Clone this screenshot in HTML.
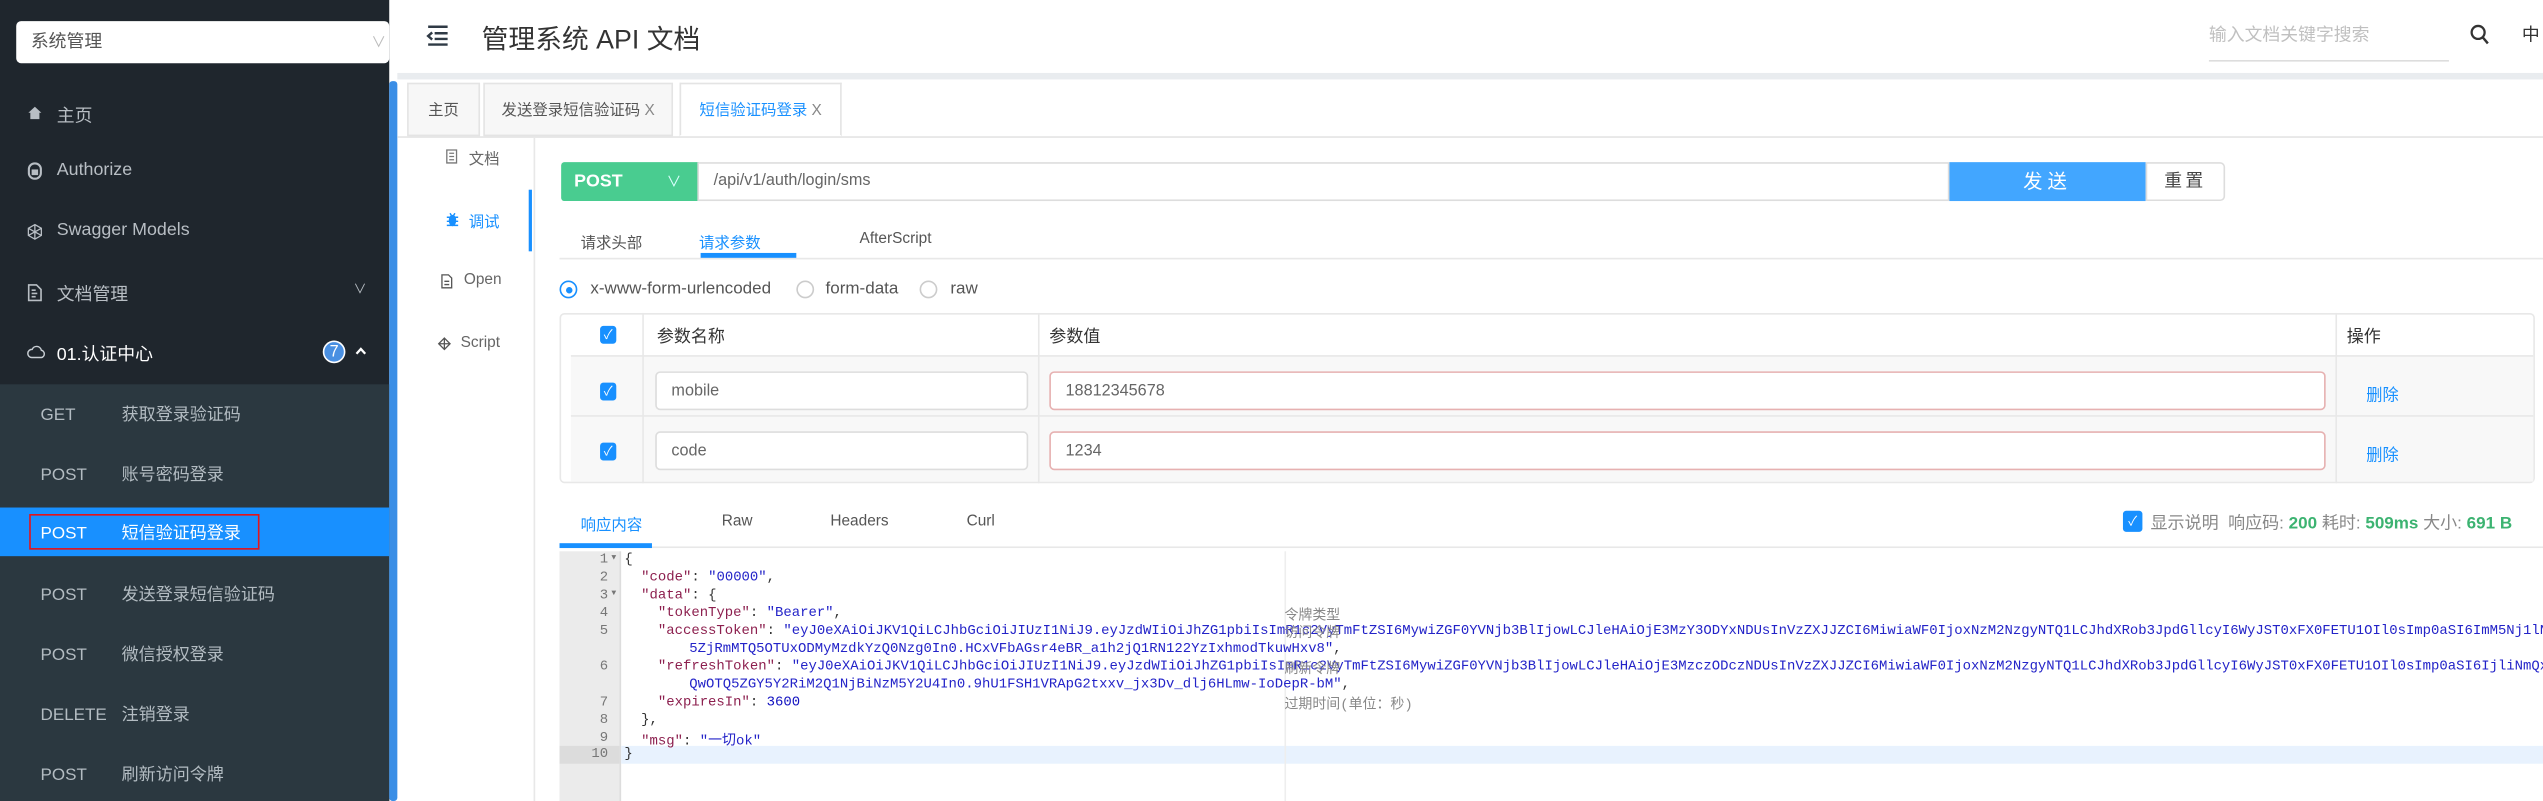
<!DOCTYPE html>
<html><head><meta charset="utf-8">
<style>
html,body{margin:0;padding:0;width:2543px;height:801px;overflow:hidden;background:#fff}
#w{position:absolute;left:0;top:0;width:1568px;height:494px;transform:scale(1.62181,1.62146);transform-origin:0 0;font-family:"Liberation Sans","Noto Sans CJK SC",sans-serif;color:#333;overflow:hidden}
.a{position:absolute;white-space:nowrap}
.side{left:0;top:0;width:240px;height:494px;background:#1f262d}
.sub{left:0;top:237px;width:240px;height:257px;background:#2b3840}
.mi{color:#b8bec4;font-size:11px}
.si{color:#b3bcc2;font-size:10.5px}
.si b{font-weight:normal;display:inline-block;width:50px}
.tab{top:51px;height:33px;border:1px solid #e4e4e4;background:#f7f7f7;font-size:9.5px;line-height:33px;box-sizing:border-box;text-align:center;color:#555}
.mono{font-family:"Liberation Mono","DejaVu Sans Mono","Noto Sans CJK SC",monospace;font-size:8.6px}
.k{color:#8c1f4e}.s{color:#2323c8}.n{color:#1010c0}
.ln{left:345px;width:30px;text-align:right;color:#777;font-size:8.6px}
.cb{width:10px;height:11px;background:#1890ff;border-radius:2px;color:#fff;font-size:8px;line-height:11px;text-align:center}
.inp{height:24px;border:1px solid #ddd;border-radius:3px;background:#fff;box-sizing:border-box;font-size:10px;line-height:22px;padding-left:9px;color:#666}
svg.a{overflow:visible}
</style></head><body><div id="w">
<div class="a side"></div>
<div class="a sub"></div>
<div class="a" style="left:10px;top:13px;width:230px;height:26px;background:#fff;border-radius:3px;font-size:11px;line-height:26px;padding-left:9px;box-sizing:border-box;color:#555">系统管理<span class="a" style="left:219px;top:0;color:#bbb;font-size:9px">∨</span></div>
<div class="a" style="left:240px;top:50px;width:5px;height:444px;background:#3a8ee6;border-radius:2px"></div>

<svg class="a" style="left:17px;top:65px" width="9" height="9" viewBox="0 0 9 9"><path d="M0.5 4.5L4.5 0.8L8.5 4.5H7.3V8.5H1.7V4.5Z" fill="#b8bec4"/></svg>
<div class="a mi" style="left:35px;top:63px">主页</div>
<svg class="a" style="left:17px;top:100px" width="9" height="11" viewBox="0 0 9 11"><rect x="0.8" y="0.8" width="7.4" height="9.4" rx="3.5" fill="none" stroke="#b8bec4" stroke-width="1.3"/><rect x="2.5" y="4.5" width="4" height="3.5" fill="#b8bec4"/></svg>
<div class="a mi" style="left:35px;top:99px">Authorize</div>
<svg class="a" style="left:17px;top:138px" width="9" height="10" viewBox="0 0 9 10"><path d="M4.5 0.5L8.5 2.8V7.2L4.5 9.5L0.5 7.2V2.8Z M4.5 0.5V9.5 M0.5 2.8L8.5 7.2 M8.5 2.8L0.5 7.2" fill="none" stroke="#b8bec4" stroke-width="0.8"/></svg>
<div class="a mi" style="left:35px;top:136px">Swagger Models</div>
<svg class="a" style="left:17px;top:175px" width="9" height="11" viewBox="0 0 9 11"><path d="M0.7 0.7H5.5L8.3 3.5V10.3H0.7Z M2.5 4H5 M2.5 6H6 M2.5 8H5" fill="none" stroke="#b8bec4" stroke-width="1"/></svg>
<div class="a mi" style="left:35px;top:173px">文档管理</div><div class="a mi" style="left:218px;top:173px;font-size:8px">∨</div>
<svg class="a" style="left:17px;top:213px" width="11" height="8" viewBox="0 0 11 8"><path d="M2.5 7.5H8.5A2.3 2.3 0 0 0 8.5 3A3 3 0 0 0 2.8 2.5A2.5 2.5 0 0 0 2.5 7.5Z" fill="none" stroke="#c8ced4" stroke-width="0.9"/></svg>
<div class="a" style="left:35px;top:210px;color:#fff;font-size:11px">01.认证中心</div>
<div class="a" style="left:199px;top:210px;width:14px;height:14px;border-radius:50%;background:#4a90e2;color:#fff;font-size:10px;line-height:14px;text-align:center;border:1px solid #fff;box-sizing:border-box">7</div>
<svg class="a" style="left:219px;top:214px" width="7" height="5" viewBox="0 0 7 5"><path d="M0.8 4.2L3.5 1.2L6.2 4.2" fill="none" stroke="#fff" stroke-width="1.4"/></svg>
<div class="a si" style="left:25px;top:248px"><b>GET</b>获取登录验证码</div>
<div class="a si" style="left:25px;top:285px"><b>POST</b>账号密码登录</div>
<div class="a" style="left:0;top:313px;width:240px;height:30px;background:#1890ff"></div>
<div class="a" style="left:18px;top:317px;width:142px;height:22px;border:1.5px solid #e3141b;box-sizing:border-box"></div>
<div class="a si" style="left:25px;top:321px;color:#fff"><b>POST</b>短信验证码登录</div>
<div class="a si" style="left:25px;top:359px"><b>POST</b>发送登录短信验证码</div>
<div class="a si" style="left:25px;top:396px"><b>POST</b>微信授权登录</div>
<div class="a si" style="left:25px;top:433px"><b style="width:50px">DELETE</b>注销登录</div>
<div class="a si" style="left:25px;top:470px"><b>POST</b>刷新访问令牌</div>

<div class="a" style="left:245px;top:45px;width:1323px;height:4px;background:#e9ecef"></div>
<svg class="a" style="left:263px;top:15px" width="14" height="14" viewBox="0 0 14 14"><path d="M1 1.5H13 M5 5.5H13 M5 9H13 M1 12.5H13 M3.5 5L1 7.2L3.5 9.4" fill="none" stroke="#2f3a45" stroke-width="1.5"/></svg>
<div class="a" style="left:297px;top:11px;font-size:16.5px;color:#333">管理系统 API 文档</div>
<div class="a" style="left:1362px;top:13px;font-size:11px;color:#c0c0c0">输入文档关键字搜索</div>
<div class="a" style="left:1362px;top:37px;width:148px;height:1px;background:#ddd"></div>
<svg class="a" style="left:1523px;top:15px" width="12" height="13" viewBox="0 0 12 13"><circle cx="5" cy="5" r="4" fill="none" stroke="#333" stroke-width="1.4"/><path d="M8 8.2L11 11.8" stroke="#333" stroke-width="1.5"/></svg>
<div class="a" style="left:1555px;top:13px;font-size:11px;color:#333">中</div>

<div class="a tab" style="left:251px;width:45px">主页</div>
<div class="a tab" style="left:298px;width:117px">发送登录短信验证码 <span style="color:#888">X</span></div>
<div class="a tab" style="left:419px;width:100px;background:#fff;color:#1890ff;border-bottom-color:#fff">短信验证码登录 <span style="color:#888">X</span></div>
<div class="a" style="left:245px;top:84px;width:1323px;height:1px;background:#e4e4e4"></div>

<div class="a" style="left:329px;top:85px;width:1px;height:409px;background:#e8e8e8"></div>
<svg class="a" style="left:275px;top:92px" width="7" height="9" viewBox="0 0 7 9"><path d="M0.5 0.5H6.5V8.5H0.5Z M2 2.5H5 M2 4.5H5 M2 6.5H5" fill="none" stroke="#777" stroke-width="0.8"/></svg>
<div class="a" style="left:289px;top:90px;font-size:9.5px;color:#666">文档</div>
<svg class="a" style="left:275px;top:131px" width="8" height="9" viewBox="0 0 8 9"><ellipse cx="4" cy="5" rx="2.3" ry="3.5" fill="#1890ff"/><path d="M0.5 3H7.5 M0.5 5.5H7.5 M0.5 8H7.5 M2.5 0.5L3.3 1.8 M5.5 0.5L4.7 1.8" stroke="#1890ff" stroke-width="0.9"/></svg>
<div class="a" style="left:289px;top:129px;font-size:9.5px;color:#1890ff">调试</div>
<div class="a" style="left:326px;top:117px;width:2px;height:38px;background:#1890ff"></div>
<svg class="a" style="left:272px;top:169px" width="7" height="9" viewBox="0 0 7 9"><path d="M0.5 0.5H4.5L6.5 2.5V8.5H0.5Z M2 4.5H5 M2 6.5H5" fill="none" stroke="#555" stroke-width="0.8"/></svg>
<div class="a" style="left:286px;top:167px;font-size:9.5px;color:#666">Open</div>
<svg class="a" style="left:270px;top:208px" width="8" height="8" viewBox="0 0 8 8"><path d="M4 0.5L7.5 4L4 7.5L0.5 4Z M4 0.5V7.5 M0.5 4H7.5" fill="none" stroke="#555" stroke-width="0.8"/></svg>
<div class="a" style="left:284px;top:206px;font-size:9.5px;color:#666">Script</div>

<div class="a" style="left:346px;top:100px;width:85px;height:24px;background:#49cc90;border-radius:2px 0 0 2px;color:#fff;font-size:11px;line-height:24px;padding-left:8px;box-sizing:border-box;font-weight:bold">POST<span class="a" style="left:65px;top:0;font-weight:normal;font-size:9px;color:#dff">∨</span></div>
<div class="a" style="left:430px;top:100px;width:772px;height:24px;border:1px solid #ddd;box-sizing:border-box;font-size:10px;line-height:22px;padding-left:9px;color:#666">/api/v1/auth/login/sms</div>
<div class="a" style="left:1202px;top:100px;width:121px;height:24px;background:#42a6ff;color:#fff;font-size:12px;line-height:24px;text-align:center;letter-spacing:3px">发送</div>
<div class="a" style="left:1323px;top:100px;width:49px;height:24px;border:1px solid #ddd;border-radius:0 3px 3px 0;box-sizing:border-box;font-size:11px;line-height:22px;text-align:center;color:#444;letter-spacing:2px">重置</div>

<div class="a" style="left:358px;top:142px;font-size:9.5px;color:#555">请求头部</div>
<div class="a" style="left:431px;top:142px;font-size:9.5px;color:#1890ff">请求参数</div>
<div class="a" style="left:530px;top:142px;font-size:9.5px;color:#555">AfterScript</div>
<div class="a" style="left:345px;top:159px;width:1223px;height:1px;background:#e8e8e8"></div>
<div class="a" style="left:432px;top:156px;width:59px;height:3px;background:#1890ff"></div>

<div class="a" style="left:345px;top:173px;width:11px;height:11px;border:1px solid #1890ff;border-radius:50%;box-sizing:border-box"><div class="a" style="left:2.5px;top:2.5px;width:4px;height:4px;border-radius:50%;background:#1890ff"></div></div>
<div class="a" style="left:364px;top:172px;font-size:10.5px;color:#555">x-www-form-urlencoded</div>
<div class="a" style="left:491px;top:173px;width:11px;height:11px;border:1px solid #ccc;border-radius:50%;box-sizing:border-box"></div>
<div class="a" style="left:509px;top:172px;font-size:10.5px;color:#555">form-data</div>
<div class="a" style="left:567px;top:173px;width:11px;height:11px;border:1px solid #ccc;border-radius:50%;box-sizing:border-box"></div>
<div class="a" style="left:586px;top:172px;font-size:10.5px;color:#555">raw</div>

<div class="a" style="left:345px;top:193px;width:1218px;height:105px;border:1px solid #e8e8e8;border-radius:3px;box-sizing:border-box"></div>
<div class="a" style="left:352px;top:219px;width:1210px;height:78px;background:#f8f8f8"></div>
<div class="a" style="left:352px;top:219px;width:1210px;height:1px;background:#e8e8e8"></div>
<div class="a" style="left:352px;top:256px;width:1210px;height:1px;background:#e8e8e8"></div>
<div class="a" style="left:396px;top:193px;width:1px;height:105px;background:#e8e8e8"></div>
<div class="a" style="left:640px;top:193px;width:1px;height:105px;background:#e8e8e8"></div>
<div class="a" style="left:1440px;top:193px;width:1px;height:105px;background:#e8e8e8"></div>
<div class="a cb" style="left:370px;top:201px">✓</div>
<div class="a cb" style="left:370px;top:236px">✓</div>
<div class="a cb" style="left:370px;top:273px">✓</div>
<div class="a" style="left:405px;top:200px;font-size:10.5px">参数名称</div>
<div class="a" style="left:647px;top:200px;font-size:10.5px">参数值</div>
<div class="a" style="left:1447px;top:200px;font-size:10.5px">操作</div>
<div class="a inp" style="left:404px;top:229px;width:230px;line-height:23px">mobile</div>
<div class="a inp" style="left:647px;top:229px;width:787px;border-color:#e6b1b1;line-height:23px">18812345678</div>
<div class="a inp" style="left:404px;top:266px;width:230px;line-height:23px">code</div>
<div class="a inp" style="left:647px;top:266px;width:787px;border-color:#e6b1b1;line-height:23px">1234</div>
<div class="a" style="left:1459px;top:235px;font-size:10px;color:#1890ff">删除</div>
<div class="a" style="left:1459px;top:272px;font-size:10px;color:#1890ff">删除</div>

<div class="a" style="left:358px;top:316px;font-size:9.5px;color:#1890ff">响应内容</div>
<div class="a" style="left:445px;top:316px;font-size:9.5px;color:#555">Raw</div>
<div class="a" style="left:512px;top:316px;font-size:9.5px;color:#555">Headers</div>
<div class="a" style="left:596px;top:316px;font-size:9.5px;color:#555">Curl</div>
<div class="a" style="left:345px;top:337px;width:1223px;height:1px;background:#e8e8e8"></div>
<div class="a" style="left:345px;top:335px;width:57px;height:3px;background:#1890ff"></div>
<div class="a cb" style="left:1309px;top:315px;width:12px;height:13px;line-height:13px">✓</div>
<div class="a" style="left:1326px;top:315px;font-size:10.5px;color:#888">显示说明 &nbsp;响应码: <b style="color:#3cb371">200</b> 耗时: <b style="color:#3cb371">509ms</b> 大小: <b style="color:#3cb371">691 B</b></div>

<div class="a" style="left:345px;top:340px;width:37px;height:154px;background:#ebebeb"></div>
<div class="a" style="left:382px;top:340px;width:1px;height:154px;background:#ddd"></div>
<div class="a" style="left:383px;top:460px;width:1185px;height:11px;background:#e8f2fe"></div>
<div class="a" style="left:345px;top:460px;width:37px;height:11px;background:#dcdcdc"></div>
<div class="a" style="left:792px;top:340px;width:1px;height:154px;background:#eee"></div>

<div class="mono">
<div class="a ln" style="top:340px">1</div><div class="a ln" style="top:351px">2</div><div class="a ln" style="top:362px">3</div><div class="a ln" style="top:373px">4</div><div class="a ln" style="top:384px">5</div><div class="a ln" style="top:406px">6</div><div class="a ln" style="top:428px">7</div><div class="a ln" style="top:439px">8</div><div class="a ln" style="top:450px">9</div><div class="a ln" style="top:460px">10</div>
<div class="a" style="left:377px;top:341px;font-size:5px;color:#777">▼</div><div class="a" style="left:377px;top:363px;font-size:5px;color:#777">▼</div>
<div class="a" style="left:385px;top:340px">{</div>
<div class="a" style="left:385px;top:351px">&nbsp;&nbsp;<span class="k">"code"</span>: <span class="s">"00000"</span>,</div>
<div class="a" style="left:385px;top:362px">&nbsp;&nbsp;<span class="k">"data"</span>: {</div>
<div class="a" style="left:385px;top:373px">&nbsp;&nbsp;&nbsp;&nbsp;<span class="k">"tokenType"</span>: <span class="s">"Bearer"</span>,</div>
<div class="a" style="left:385px;top:384px">&nbsp;&nbsp;&nbsp;&nbsp;<span class="k">"accessToken"</span>: <span class="s">"eyJ0eXAiOiJKV1QiLCJhbGciOiJIUzI1NiJ9.eyJzdWIiOiJhZG1pbiIsImR1c2VyTmFtZSI6MywiZGF0YVNjb3BlIjowLCJleHAiOjE3MzY3ODYxNDUsInVzZXJJZCI6MiwiaWF0IjoxNzM2NzgyNTQ1LCJhdXRob3JpdGllcyI6WyJST0xFX0FETU1OIl0sImp0aSI6ImM5Nj1lNjMyN2I</span></div>
<div class="a s" style="left:425px;top:395px">5ZjRmMTQ5OTUxODMyMzdkYzQ0Nzg0In0.HCxVFbAGsr4eBR_a1h2jQ1RN122YzIxhmodTkuwHxv8"<span style="color:#333">,</span></div>
<div class="a" style="left:385px;top:406px">&nbsp;&nbsp;&nbsp;&nbsp;<span class="k">"refreshToken"</span>: <span class="s">"eyJ0eXAiOiJKV1QiLCJhbGciOiJIUzI1NiJ9.eyJzdWIiOiJhZG1pbiIsImR1c2VyTmFtZSI6MywiZGF0YVNjb3BlIjowLCJleHAiOjE3MzczODczNDUsInVzZXJJZCI6MiwiaWF0IjoxNzM2NzgyNTQ1LCJhdXRob3JpdGllcyI6WyJST0xFX0FETU1OIl0sImp0aSI6IjliNmQxOTcxMG</span></div>
<div class="a s" style="left:425px;top:417px">QwOTQ5ZGY5Y2RiM2Q1NjBiNzM5Y2U4In0.9hU1FSH1VRApG2txxv_jx3Dv_dlj6HLmw-IoDepR-bM"<span style="color:#333">,</span></div>
<div class="a" style="left:385px;top:428px">&nbsp;&nbsp;&nbsp;&nbsp;<span class="k">"expiresIn"</span>: <span class="n">3600</span></div>
<div class="a" style="left:385px;top:439px">&nbsp;&nbsp;},</div>
<div class="a" style="left:385px;top:450px">&nbsp;&nbsp;<span class="k">"msg"</span>: <span class="s">"一切ok"</span></div>
<div class="a" style="left:385px;top:460px">}</div>
<div class="a" style="left:792px;top:373px;color:#888">令牌类型</div>
<div class="a" style="left:792px;top:384px;color:#888">访问令牌</div>
<div class="a" style="left:792px;top:406px;color:#888">刷新令牌</div>
<div class="a" style="left:792px;top:428px;color:#888">过期时间(单位：秒)</div>
</div>
</div></body></html>
